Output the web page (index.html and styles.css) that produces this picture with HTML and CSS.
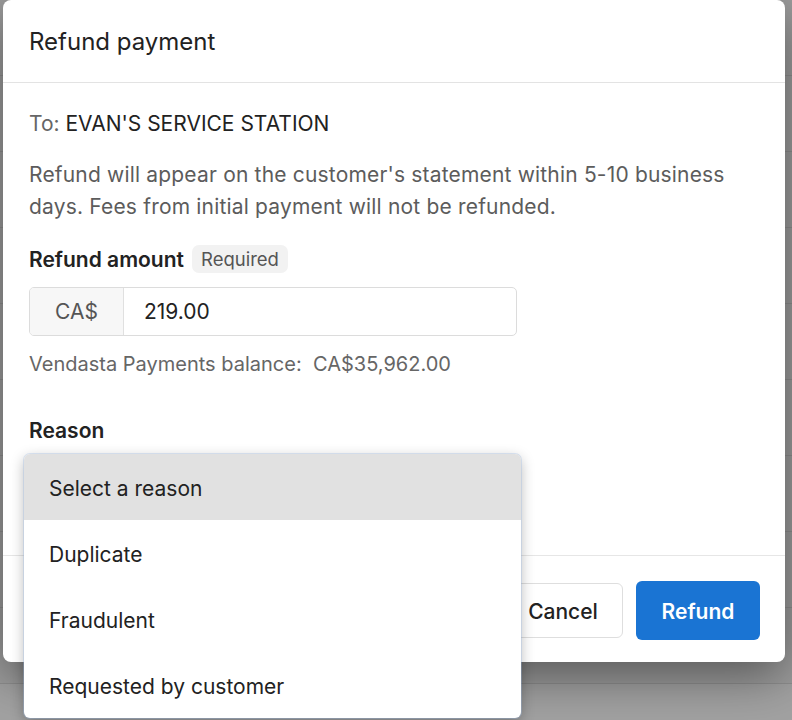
FILE: index.html
```html
<!DOCTYPE html>
<html lang="en">
<head>
<meta charset="utf-8">
<title>Refund payment</title>
<link rel="stylesheet" href="styles.css">
</head>
<body>
<div class="backdrop">
  <div class="bg-row"></div>
  <div class="bg-row"></div>
  <div class="bg-row"></div>
  <div class="bg-row"></div>
  <div class="bg-row"></div>
  <div class="bg-row"></div>
  <div class="bg-row"></div>
  <div class="bg-row"></div>
  <div class="bg-row"></div>
</div>
<div class="dialog">
  <div class="dialog-header">
    <h1 class="dialog-title">Refund payment</h1>
  </div>
  <div class="dialog-body">
    <p class="to-line"><span class="to-label">To:</span> EVAN'S SERVICE STATION</p>
    <p class="note">Refund will appear on the customer's statement within 5-10 business days. Fees from initial payment will not be refunded.</p>
    <div class="label-row">
      <span class="field-label">Refund amount</span>
      <span class="badge">Required</span>
    </div>
    <div class="input-group">
      <span class="prefix">CA$</span>
      <span class="amount">219.00</span>
    </div>
    <p class="balance">Vendasta Payments balance:&nbsp; CA$35,962.00</p>
    <div class="label-row reason-label">
      <span class="field-label">Reason</span>
    </div>
    <div class="select-wrap">
      <div class="select-box"></div>
      <ul class="dropdown">
        <li class="option active">Select a reason</li>
        <li class="option">Duplicate</li>
        <li class="option">Fraudulent</li>
        <li class="option">Requested by customer</li>
      </ul>
    </div>
  </div>
  <div class="dialog-footer">
    <button class="btn btn-secondary">Cancel</button>
    <button class="btn btn-primary">Refund</button>
  </div>
</div>
</body>
</html>
```

FILE: styles.css
```css
* { box-sizing: border-box; }
html, body {
  margin: 0;
  padding: 0;
  width: 792px;
  height: 720px;
  overflow: hidden;
}
body {
  font-family: Inter, "Liberation Sans", sans-serif;
  background: #a2a2a2;
  position: relative;
}
.backdrop {
  display: flex;
  flex-direction: column;
}
.bg-row {
  height: 76px;
  border-bottom: 1px solid #8f8f8f;
  background: #9d9d9d;
}
.dialog {
  position: absolute;
  left: 3px;
  top: 0;
  width: 782px;
  height: 662px;
  background: #fff;
  border-radius: 8px;
  box-shadow: 0 14px 50px rgba(0,0,0,0.45);
  display: flex;
  flex-direction: column;
}
.dialog-header {
  height: 83px;
  border-bottom: 1px solid #e3e3e3;
  display: flex;
  align-items: center;
  padding: 0 26px;
}
.dialog-title {
  margin: 0;
  font-size: 24px;
  font-weight: 400;
  color: #222;
}
.dialog-body {
  padding: 27px 26px 0;
  flex: 1;
}
.to-line {
  margin: 0;
  font-size: 21px;
  line-height: 28px;
  color: #222;
}
.to-label { color: #666; }
.note {
  margin: 21px 0 0;
  font-size: 21px;
  line-height: 32px;
  letter-spacing: 0.18px;
  color: #5c5c5c;
}
.label-row {
  display: flex;
  align-items: center;
  gap: 8px;
  margin-top: 22px;
  height: 28px;
}
.field-label {
  font-size: 21px;
  font-weight: 600;
  color: #222;
}
.badge {
  background: #f2f2f2;
  border-radius: 7px;
  padding: 0 9px;
  height: 28px;
  line-height: 28px;
  font-size: 18.5px;
  color: #555;
}
.input-group {
  margin-top: 14px;
  width: 488px;
  height: 49px;
  border: 1px solid #dcdcdc;
  border-radius: 5px;
  display: flex;
  align-items: stretch;
  overflow: hidden;
}
.prefix {
  width: 94px;
  background: #f7f7f7;
  border-right: 1px solid #e0e0e0;
  display: flex;
  align-items: center;
  justify-content: center;
  font-size: 21px;
  color: #555;
}
.amount {
  display: flex;
  align-items: center;
  padding-left: 20px;
  font-size: 21px;
  color: #222;
}
.balance {
  margin: 14px 0 0;
  font-size: 20px;
  line-height: 28px;
  color: #666;
}
.reason-label { margin-top: 38px; }
.select-wrap {
  position: relative;
  margin-top: 10px;
  width: 492px;
}
.select-box {
  height: 50px;
  border: 1px solid #dcdcdc;
  border-radius: 5px;
}
.dropdown {
  position: absolute;
  left: -5px;
  top: 0;
  width: 497px;
  margin: 0;
  padding: 0;
  list-style: none;
  background: #fff;
  border-radius: 6px;
  box-shadow: 0 0 0 1px rgba(160,190,230,0.35), 0 4px 14px rgba(0,0,0,0.28);
  overflow: hidden;
  z-index: 5;
}
.option {
  height: 66px;
  display: flex;
  align-items: center;
  padding: 3px 0 0 25px;
  font-size: 21px;
  color: #222;
}
.option.active { background: #e1e1e1; }
.dialog-footer {
  height: 107px;
  border-top: 1px solid #e6e6e6;
  display: flex;
  justify-content: flex-end;
  align-items: center;
  gap: 13px;
  padding: 2px 25px 0;
}
.btn {
  font-family: inherit;
  font-size: 21px;
  border-radius: 6px;
  cursor: pointer;
  padding-top: 3px;
}
.btn-secondary {
  height: 55px;
  width: 120px;
  background: #fff;
  border: 1px solid #dedede;
  color: #222;
  font-weight: 500;
}
.btn-primary {
  height: 59px;
  width: 124px;
  background: #1a74d3;
  border: none;
  color: #fff;
  font-weight: 600;
}
```
